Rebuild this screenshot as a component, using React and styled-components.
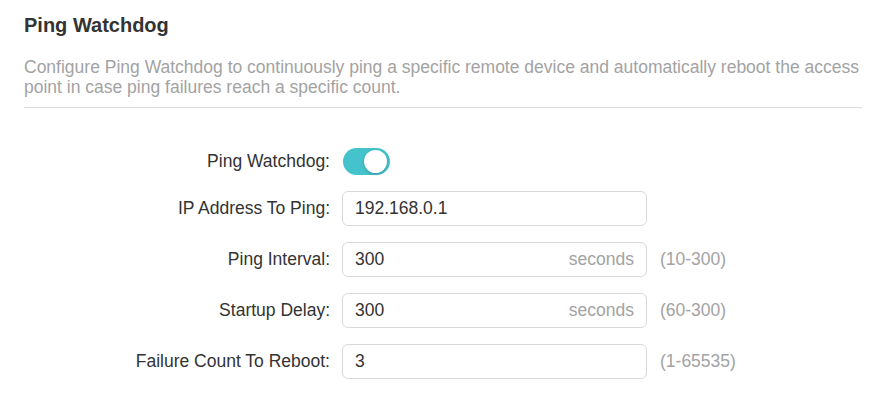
import styled, { createGlobalStyle } from "styled-components";

const GlobalStyle = createGlobalStyle`
    body {
        margin: 0;
        background: #ffffff;
        font-family: "Liberation Sans", Arial, sans-serif;
    }
`

const Section = styled.section`
    width: 838px;
    padding: 13px 0 0 24px;
`

const Title = styled.h2`
    margin: 0;
    font-size: 20px;
    font-weight: 700;
    line-height: 24px;
    color: #333333;
`

const Description = styled.p`
    margin: 20px 0 0;
    padding-bottom: 10px;
    font-size: 17.5px;
    line-height: 20px;
    color: #a3a3a3;
    border-bottom: 1px solid #dcdcdc;
`

const Form = styled.div`
    display: flex;
    flex-direction: column;
    gap: 16px;
    padding-top: 39px;
`

const Row = styled.div`
    display: flex;
    align-items: center;
    height: ${({ short }) => (short ? "28px" : "35px")};
`

const Label = styled.label`
    width: 306px;
    padding-right: 12px;
    text-align: right;
    font-size: 17.5px;
    color: #333333;
`

const Switch = styled.span`
    position: relative;
    width: 47px;
    height: 27px;
    margin-left: 1px;
    border-radius: 14px;
    background-color: ${({ on }) => (on ? "#45c3cc" : "#cccccc")};
    &::after {
        content: "";
        position: absolute;
        top: 2px;
        left: ${({ on }) => (on ? "21px" : "2px")};
        width: 23px;
        height: 23px;
        border-radius: 50%;
        background: #ffffff;
        box-shadow: 0 1px 3px rgba(0, 0, 0, 0.25);
    }
`

const Field = styled.div`
    box-sizing: border-box;
    width: 305px;
    height: 35px;
    padding: 0 12px;
    display: flex;
    align-items: center;
    justify-content: space-between;
    border: 1px solid #d9d9d9;
    border-radius: 6px;
    font-size: 17.5px;
`

const Value = styled.span`
    color: #333333;
`

const Unit = styled.span`
    color: #a3a3a3;
`

const Hint = styled.span`
    margin-left: 13px;
    font-size: 17.5px;
    color: #a3a3a3;
`

const fields = [
    { label: "IP Address To Ping:", value: "192.168.0.1" },
    { label: "Ping Interval:", value: "300", unit: "seconds", hint: "(10-300)" },
    { label: "Startup Delay:", value: "300", unit: "seconds", hint: "(60-300)" },
    { label: "Failure Count To Reboot:", value: "3", hint: "(1-65535)" },
]

function App() {
    return (
        <>
            <GlobalStyle />
            <Section>
                <Title>Ping Watchdog</Title>
                <Description>
                    Configure Ping Watchdog to continuously ping a specific remote device and automatically reboot the access point in case ping failures reach a specific count.
                </Description>
                <Form>
                    <Row short>
                        <Label>Ping Watchdog:</Label>
                        <Switch on />
                    </Row>
                    {fields.map((field) => (
                        <Row key={field.label}>
                            <Label>{field.label}</Label>
                            <Field>
                                <Value>{field.value}</Value>
                                {field.unit && <Unit>{field.unit}</Unit>}
                            </Field>
                            {field.hint && <Hint>{field.hint}</Hint>}
                        </Row>
                    ))}
                </Form>
            </Section>
        </>
    );
}

export default App;
